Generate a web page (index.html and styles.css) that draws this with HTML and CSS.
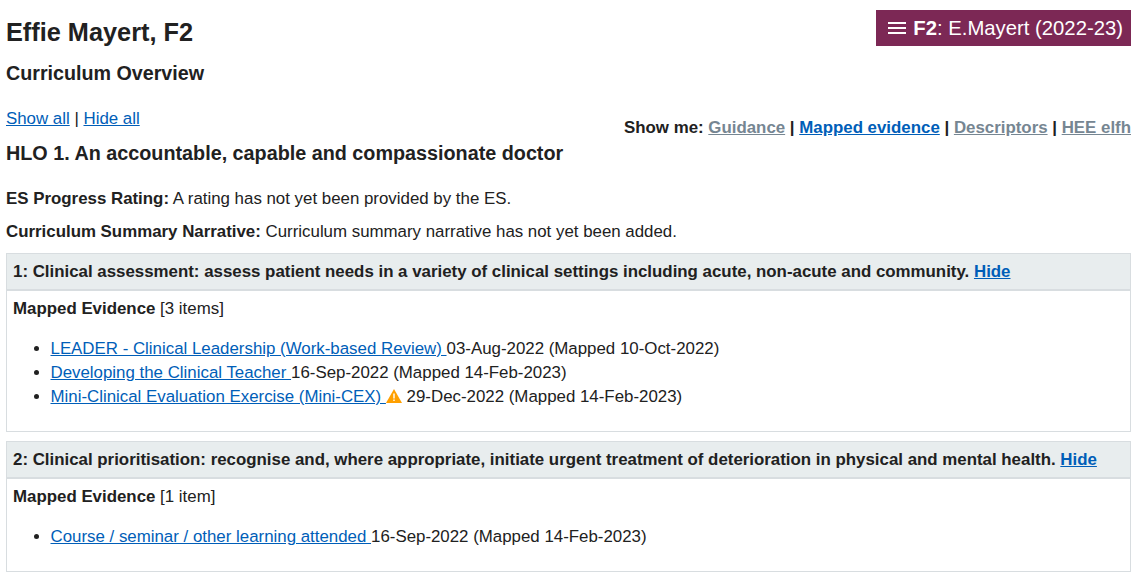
FILE: index.html
```html
<!DOCTYPE html>
<html lang="en">
<head>
    <meta charset="UTF-8">
    <meta name="viewport" content="width=device-width, initial-scale=1.0">
    <title>Curriculum Overview</title>
    <link rel="stylesheet" href="styles.css">
</head>
<body>
    <header class="page-header">
        <div>
            <h1 class="name">Effie Mayert, F2</h1>
            <h2 class="subtitle">Curriculum Overview</h2>
        </div>
        <a class="post-badge" href="#">
            <svg class="menu-glyph" viewBox="0 0 18 12" width="18" height="12"><path d="M0 1h18M0 6h18M0 11h18" stroke="currentColor" stroke-width="2"/></svg>
            <span><b>F2</b>: E.Mayert (2022-23)</span>
        </a>
    </header>

    <div class="toolbar">
        <div class="toggle-all"><a href="#">Show all</a> | <a href="#">Hide all</a></div>
        <div class="show-me">Show me: <a class="off" href="#">Guidance</a> | <a href="#">Mapped evidence</a> | <a class="off" href="#">Descriptors</a> | <a class="off" href="#">HEE elfh</a></div>
    </div>

    <h3 class="hlo">HLO 1. An accountable, capable and compassionate doctor</h3>

    <p class="summary"><b>ES Progress Rating:</b> A rating has not yet been provided by the ES.</p>
    <p class="summary"><b>Curriculum Summary Narrative:</b> Curriculum summary narrative has not yet been added.</p>

    <section class="panel">
        <div class="panel-head">1: Clinical assessment: assess patient needs in a variety of clinical settings including acute, non-acute and community. <a href="#">Hide</a></div>
        <div class="panel-body">
            <div><b>Mapped Evidence</b> [3 items]</div>
            <ul class="evidence">
                <li><a href="#">LEADER - Clinical Leadership (Work-based Review) </a>03-Aug-2022 (Mapped 10-Oct-2022)</li>
                <li><a href="#">Developing the Clinical Teacher </a>16-Sep-2022 (Mapped 14-Feb-2023)</li>
                <li><a href="#">Mini-Clinical Evaluation Exercise (Mini-CEX) </a><svg class="warn" viewBox="0 0 16 14" width="16" height="14"><path d="M8 0 16 14H0z" fill="#ffa000"/><path d="M7.3 4.6h1.4v4.8H7.3zM7.3 10.4h1.4v1.6H7.3z" fill="#fff"/></svg> 29-Dec-2022 (Mapped 14-Feb-2023)</li>
            </ul>
        </div>
    </section>

    <section class="panel">
        <div class="panel-head">2: Clinical prioritisation: recognise and, where appropriate, initiate urgent treatment of deterioration in physical and mental health. <a href="#">Hide</a></div>
        <div class="panel-body">
            <div><b>Mapped Evidence</b> [1 item]</div>
            <ul class="evidence">
                <li><a href="#">Course / seminar / other learning attended </a>16-Sep-2022 (Mapped 14-Feb-2023)</li>
            </ul>
        </div>
    </section>
</body>
</html>
```

FILE: styles.css
```css
body {
    margin: 0;
    padding: 10px 6px 0;
    font-family: "Liberation Sans", Arial, sans-serif;
    font-size: 16.88px;
    line-height: 24px;
    color: #212121;
    background-color: white;
}
a {
    color: #005eb8;
}
.page-header {
    display: flex;
    justify-content: space-between;
    align-items: flex-start;
}
.name {
    margin: 7px 0 0;
    font-size: 25.3px;
    line-height: 30px;
}
.subtitle {
    margin: 13px 0 0;
    font-size: 19.7px;
    line-height: 26px;
}
.post-badge {
    display: flex;
    align-items: center;
    gap: 7px;
    height: 36px;
    padding: 0 8px 0 12px;
    background-color: #7c2855;
    color: white;
    font-size: 20.3px;
    text-decoration: none;
}
.toolbar {
    display: flex;
    justify-content: space-between;
    align-items: flex-start;
    margin-top: 21px;
}
.show-me {
    margin-top: 9px;
    font-weight: bold;
}
.show-me a.off {
    color: #768692;
}
.hlo {
    margin: 0;
    font-size: 19.77px;
    line-height: 26px;
}
.summary {
    margin: 21px 0 0;
}
.summary + .summary {
    margin-top: 9px;
}
.panel {
    margin-top: 9px;
    border: 1px solid #d8dde0;
}
.panel-head {
    padding: 6px 6px 5px;
    font-weight: bold;
    background-color: #e8edee;
    border-bottom: 2px solid #d8dde0;
}
.panel-body {
    padding: 6px 6px 0;
}
.evidence {
    margin: 16px 0 22px;
    padding-left: 37.5px;
}
.warn {
    vertical-align: -1px;
}
```
